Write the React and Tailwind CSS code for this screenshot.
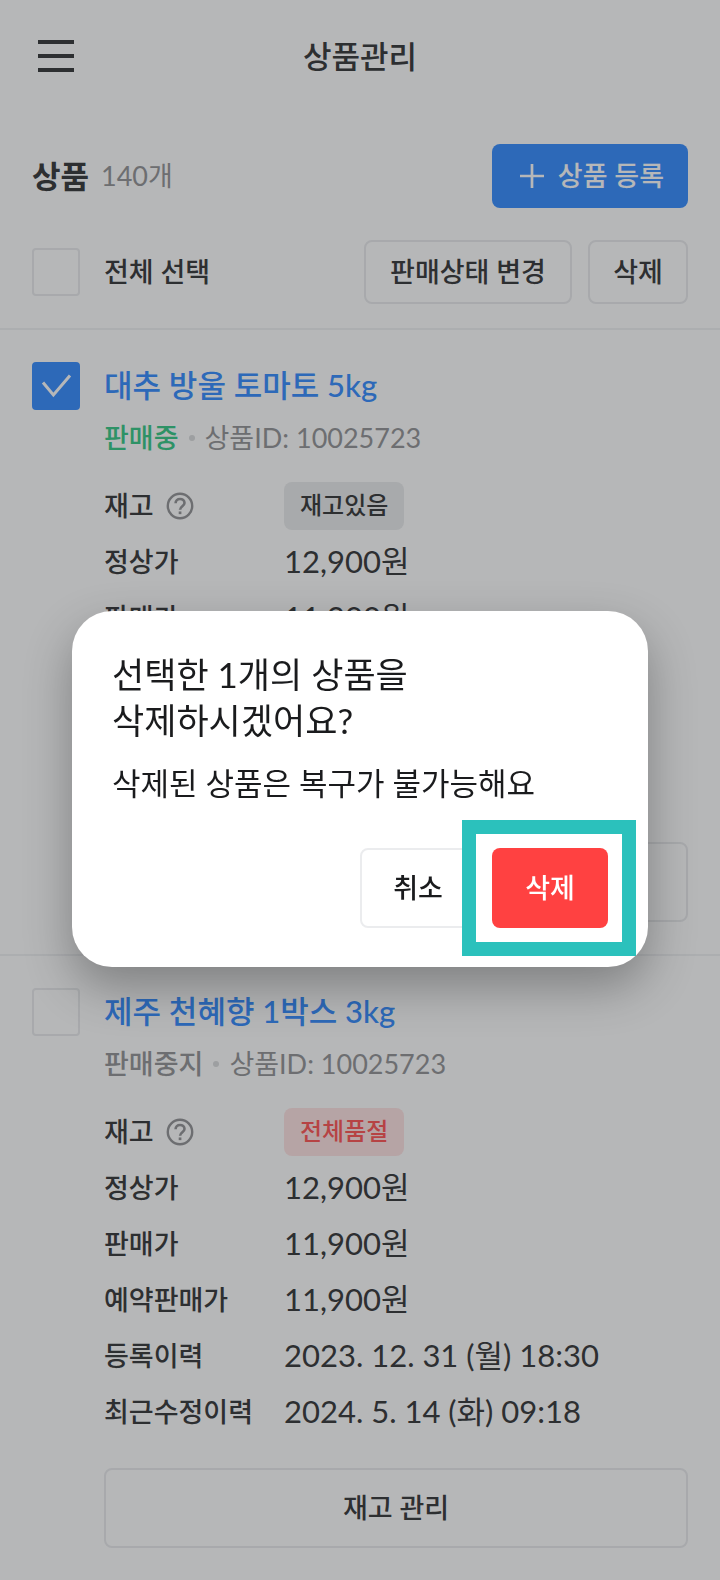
import { useState } from "react";

const products = [
  {
    id: "10025723",
    name: "대추 방울 토마토 5kg",
    status: "판매중",
    statusClass: "text-[#3fcb8c]",
    stock: "재고있음",
    stockClass: "bg-[#ecedee] text-[#3e4042]",
    selected: true,
  },
  {
    id: "10025723",
    name: "제주 천혜향 1박스 3kg",
    status: "판매중지",
    statusClass: "text-[#98999b]",
    stock: "전체품절",
    stockClass: "bg-[#ffe5e5] text-[#ff5c5c]",
    selected: false,
  },
];

const details = [
  ["정상가", "12,900원"],
  ["판매가", "11,900원"],
  ["예약판매가", "11,900원"],
  ["등록이력", "2023. 12. 31 (월) 18:30"],
  ["최근수정이력", "2024. 5. 14 (화) 09:18"],
];

function Checkbox({ id, label, defaultChecked }) {
  return (
    <span className="relative block size-12 shrink-0">
      <input
        id={id}
        type="checkbox"
        aria-label={label}
        defaultChecked={defaultChecked}
        className="peer block size-12 appearance-none rounded-sm border-2 border-[#ebecee] checked:border-[#3f92ff] checked:bg-[#3f92ff]"
      />
      <svg
        viewBox="0 0 48 48"
        className="pointer-events-none absolute inset-0 hidden size-12 peer-checked:block"
        fill="none"
        stroke="#fff"
        strokeWidth="3"
        aria-hidden="true"
      >
        <path d="M11 20.5 21.4 33 38 13.5" />
      </svg>
    </span>
  );
}

function HelpIcon() {
  return (
    <svg viewBox="0 0 28 28" className="size-7" fill="none" stroke="#98999b" strokeWidth="2.4" aria-hidden="true">
      <circle cx="14" cy="14" r="12.2" />
      <path d="M9.6 11.3c0-2.7 1.900-4.300 4.400-4.300s4.500 1.600 4.500 4c0 3.200-4.400 3.400-4.400 6.800" strokeWidth="2.600" />
      <path d="M12.700 20.800h2.700" strokeWidth="2.700" />
    </svg>
  );
}

function OutlineButton({ className, children }) {
  return (
    <button type="button" className={"rounded-lg border-2 border-[#ebecee] text-[27px] font-medium " + className}>
      {children}
    </button>
  );
}

function Product({ product, index }) {
  return (
    <li className="flex gap-6 border-t-2 border-[#f1f2f4] px-8 py-8">
      <Checkbox id={"product-" + index} label={product.name} defaultChecked={product.selected} />
      <div className="min-w-0 flex-1">
        <h2 className="text-[31px] leading-[46px] font-medium">
          <a href="#product" className="text-[#3f92ff]">
            {product.name}
          </a>
        </h2>
        <p className="mt-2.5 flex items-center text-[27px] leading-10 text-[#98999b]">
          <span className={"font-medium " + product.statusClass}>{product.status}</span>
          <span className="mx-2.5 size-1.5 rounded-full bg-[#dcdddf]" />
          <span>상품ID: {product.id}</span>
        </p>
        <dl className="mt-6 grid grid-cols-[180px_1fr] gap-y-2 leading-[48px]">
          <dt className="flex items-center gap-3 text-[27px] font-medium">
            재고
            <button type="button" aria-label="재고 도움말">
              <HelpIcon />
            </button>
          </dt>
          <dd>
            <span className={"inline-block h-12 rounded-lg px-4 align-top text-[24px] leading-[46px] font-medium " + product.stockClass}>
              {product.stock}
            </span>
          </dd>
          {details.map(([label, value]) => (
            <div key={label} className="contents">
              <dt className="text-[27px] font-medium">{label}</dt>
              <dd className="text-[31px] leading-[46px]">{value}</dd>
            </div>
          ))}
        </dl>
        <OutlineButton className="mt-8 h-20 w-full">재고 관리</OutlineButton>
      </div>
    </li>
  );
}

function DeleteDialog({ onClose }) {
  return (
    <div className="fixed inset-0 flex items-center justify-center bg-[#02060a]/29 px-18 pb-0.5">
      <div
        role="dialog"
        aria-modal="true"
        aria-labelledby="dialog-title"
        className="w-full max-w-xl rounded-[40px] bg-white px-10 pt-10 pb-[39px] text-[#1a1b1d] shadow-[0_20px_48px_rgba(0,0,0,0.3)]"
      >
        <h2 id="dialog-title" className="text-[35px] leading-[46px]">
          <span className="block">선택한 1개의 상품을</span>
          <span className="block">삭제하시겠어요?</span>
        </h2>
        <p className="mt-5 text-[31px] leading-10">삭제된 상품은 복구가 불가능해요</p>
        <div className="mt-[45px] flex justify-end gap-4">
          <OutlineButton className="h-20 w-29">취소</OutlineButton>
          <div className="relative">
            <button
              type="button"
              onClick={onClose}
              className="block h-20 w-29 rounded-lg bg-[#ff4141] text-[27px] font-medium text-white"
            >
              삭제
            </button>
            <span className="pointer-events-none absolute -inset-y-7 -right-7 -left-[30px] border-[14px] border-[#2bc1bc]" />
          </div>
        </div>
      </div>
    </div>
  );
}

export default function App() {
  const [open, setOpen] = useState(true);
  return (
    <div className="min-h-screen bg-white font-[Lato,'Noto_Sans_CJK_KR',sans-serif] text-[#3e4042]">
      <header className="grid h-28 grid-cols-[1fr_auto_1fr] items-center px-8">
        <button type="button" aria-label="메뉴" className="size-12">
          <svg viewBox="0 0 48 48" className="size-12" stroke="currentColor" strokeWidth="4" aria-hidden="true">
            <path d="M6 10h36M6 24h36M6 38h36" />
          </svg>
        </button>
        <h1 className="text-[31px] font-medium">상품관리</h1>
      </header>
      <main>
        <div className="flex items-center justify-between px-8 pt-8">
          <div className="flex items-center gap-3">
            <h2 className="text-[31px] font-bold">상품</h2>
            <span className="text-[27px] text-[#98999b]">140개</span>
          </div>
          <button
            type="button"
            className="flex h-16 items-center gap-2.5 rounded-lg bg-[#3f92ff] px-6 text-[27px] font-medium text-white"
          >
            <svg viewBox="0 0 32 32" className="size-8" stroke="currentColor" strokeWidth="2.7" aria-hidden="true">
              <path d="M4 16h24M16 4v24" />
            </svg>
            상품 등록
          </button>
        </div>
        <div className="flex items-center px-8 pt-8 pb-6">
          <Checkbox id="select-all" />
          <label htmlFor="select-all" className="ml-6 flex-1 text-[27px] font-medium">
            전체 선택
          </label>
          <OutlineButton className="h-16 w-52">판매상태 변경</OutlineButton>
          <OutlineButton className="ml-4 h-16 w-25">삭제</OutlineButton>
        </div>
        <ul>
          {products.map((product, index) => (
            <Product key={index} product={product} index={index} />
          ))}
        </ul>
      </main>
      {open && <DeleteDialog onClose={() => setOpen(false)} />}
    </div>
  );
}
